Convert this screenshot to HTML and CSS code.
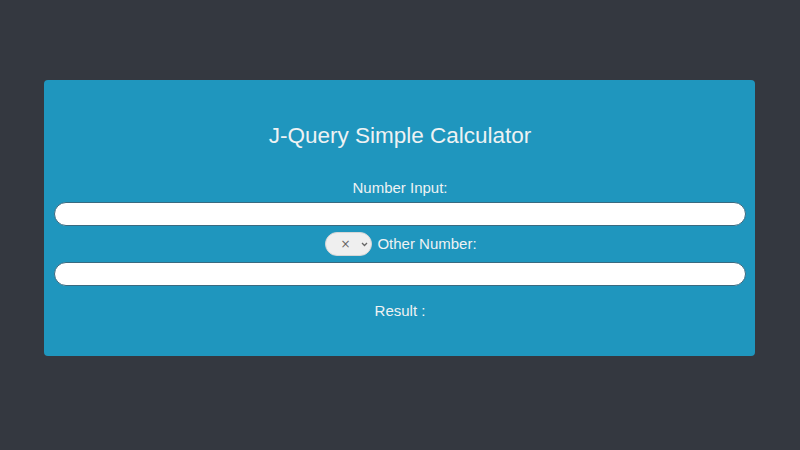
FILE: index.html
```html
<!DOCTYPE html>
<html>
<head>
<meta charset="utf-8">
<link rel="stylesheet" href="styles.css">
</head>
<body>
<div class="panel">
  <h1 class="title">J-Query Simple Calculator</h1>
  <label class="label" for="num1">Number Input:</label>
  <input class="field" id="num1" type="text">
  <div class="row">
    <span class="op-wrap">
      <select class="op">
        <option>×</option>
        <option>+</option>
        <option>-</option>
        <option>÷</option>
      </select>
      <svg class="chev" width="7" height="5" viewBox="0 0 7 5"><path d="M1 1 L3.5 3.5 L6 1" fill="none" stroke="#666" stroke-width="1.3"/></svg>
    </span>
    <span class="row-label">Other Number:</span>
  </div>
  <input class="field" id="num2" type="text">
  <div class="result">Result :</div>
</div>
</body>
</html>
```
FILE: styles.css
```css
html, body {
  margin: 0;
  padding: 0;
  background: #343840;
  font-family: "Liberation Sans", Arial, sans-serif;
}
body {
  padding-top: 80px;
}
.panel {
  margin: 0 45px 0 44px;
  padding: 43px 9px 36px 10px;
  background: #1f96be;
  border-radius: 4px;
  text-align: center;
  color: #eef2f3;
  display: flex;
  flex-direction: column;
  align-items: stretch;
}
.title {
  margin: 0;
  font-size: 22.5px;
  font-weight: normal;
  line-height: 26px;
}
.label {
  display: block;
  margin-top: 30px;
  font-size: 15px;
  line-height: 18px;
}
.field {
  box-sizing: border-box;
  margin: 5px 0 0;
  width: 100%;
  height: 24px;
  border: 1px solid #3a6a80;
  border-radius: 12px;
  background: #fff;
  outline: none;
}
#num2 {
  margin-top: 6px;
}
.row {
  margin-top: 6px;
  display: flex;
  justify-content: center;
  align-items: center;
  gap: 5px;
  height: 24px;
}
.op-wrap {
  position: relative;
  display: inline-block;
  height: 24px;
  margin-left: 2px;
}
.op {
  -webkit-appearance: none;
  appearance: none;
  box-sizing: border-box;
  width: 47px;
  height: 24px;
  border: 1px solid #d6d6d6;
  border-radius: 12px;
  background: #efefef;
  color: #666;
  font-family: "DejaVu Sans", sans-serif;
  font-size: 12px;
  padding: 0 0 0 14px;
  margin: 0;
  outline: none;
}
.chev {
  position: absolute;
  right: 4px;
  top: 10px;
  pointer-events: none;
}
.row-label {
  font-size: 15px;
  line-height: 18px;
}
.result {
  margin-top: 16px;
  font-size: 15px;
  line-height: 18px;
}
```
